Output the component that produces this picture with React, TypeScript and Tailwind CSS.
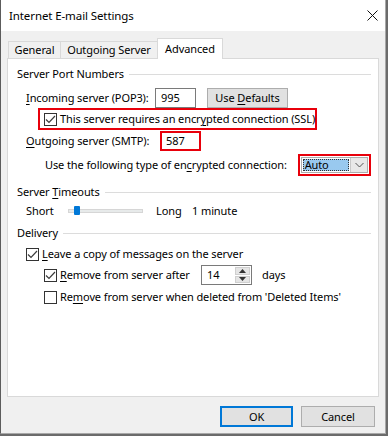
import React from "react";

function U({ c }: { c: string }) {
  return <span className="underline underline-offset-[2px] decoration-[1px]">{c}</span>;
}

function Check({ checked }: { checked: boolean }) {
  return (
    <span className="w-[13px] h-[13px] border border-[#333333] bg-white flex items-center justify-center shrink-0">
      {checked && (
        <svg width="11" height="11" viewBox="0 0 11 11">
          <path d="M1 5.5 L4 8.5 L10 2" fill="none" stroke="#3c3c3c" strokeWidth="1.2" />
        </svg>
      )}
    </span>
  );
}

function Group({ children }: { children: React.ReactNode }) {
  return (
    <div className="flex items-center h-[16px]">
      <span className="whitespace-nowrap">{children}</span>
      <div className="flex-1 h-px bg-[#dcdcdc] ml-[5px]" />
    </div>
  );
}

export default function App() {
  return (
    <div className="w-[388px] h-[436px] bg-[#6b6b6b] font-['Noto_Sans',sans-serif] text-[11px] tracking-[-0.1px] leading-[16px] text-black overflow-hidden">
      <div className="w-[386px] h-[434px] border-l border-l-[#5c5c5c] border-r border-r-[#a8a8a8] border-b border-b-[#a8a8a8] flex flex-col bg-[#f0f0f0]">
        {/* title bar */}
        <div className="h-[31px] bg-white flex items-center justify-between pl-[8px] pr-[8px] shrink-0">
          <span className="text-[11.5px] tracking-[-0.1px]">Internet E-mail Settings</span>
          <svg width="11" height="11" viewBox="0 0 11 11" className="mr-[-1px]">
            <path d="M0.5 0.5 L10.5 10.5 M10.5 0.5 L0.5 10.5" stroke="#111" strokeWidth="1" fill="none" />
          </svg>
        </div>

        <div className="flex-1 flex flex-col px-[6px]">
          {/* tabs */}
          <div className="h-[27px] flex items-end pl-[1px] shrink-0">
            <div className="w-[53px] h-[17px] border-l border-t border-r border-[#d9d9d9] flex items-center justify-center">General</div>
            <div className="w-[97px] h-[17px] border-t border-r border-[#d9d9d9] flex items-center justify-center">Outgoing Server</div>
            <div className="-ml-px w-[66px] h-[21px] -mb-px relative z-10 bg-white border-l border-t border-r border-[#d9d9d9] flex items-center justify-center">Advanced</div>
          </div>

          {/* panel */}
          <div className="h-[339px] bg-white border border-[#d9d9d9] pl-[9px] pr-[7px] pt-[7px] flex flex-col shrink-0">
            <Group>Server Port Numbers</Group>

            <div className="mt-[6px] h-[20px] flex items-center ml-[9px]">
              <span className="w-[129px] whitespace-nowrap"><U c="I" />ncoming server (POP3):</span>
              <div className="w-[41px] h-[20px] border border-[#7a7a7a] flex items-center pl-[5px]">995</div>
              <div className="ml-[11px] w-[81px] h-[20px] bg-[#e1e1e1] border border-[#adadad] flex items-center justify-center">
                Use&nbsp;<U c="D" />efaults
              </div>
            </div>

            <div className="h-[22px] ml-[21px] w-[279px] border-2 border-[#e8000b] flex items-center pl-[4px]">
              <Check checked />
              <span className="ml-[3px] whitespace-nowrap">This server requires an encr<U c="y" />pted connection (SSL)</span>
            </div>

            <div className="mt-[1px] h-[20px] flex items-center ml-[9px]">
              <span className="w-[134px] whitespace-nowrap"><U c="O" />utgoing server (SMTP):</span>
              <div className="w-[41px] h-[20px] border-2 border-[#e8000b] flex items-center pl-[4px]">587</div>
            </div>

            <div className="mt-[3px] h-[22px] flex items-center ml-[28px]">
              <span className="w-[255px] whitespace-nowrap">Use the following type of en<U c="c" />rypted connection:</span>
              <div className="w-[74px] h-[22px] border-2 border-[#e8000b] p-px">
                <div className="h-[16px] border border-[#adadad] bg-white flex">
                  <div className="flex-1 p-px">
                    <div className="h-full bg-[#99c9ef] border border-dotted border-[#333] flex items-center pl-[1px] leading-[12px]">Auto</div>
                  </div>
                  <div className="w-[17px] bg-[#e8e8e8] border-l border-[#c8c8c8] flex items-center justify-center">
                    <svg width="9" height="6" viewBox="0 0 9 6">
                      <path d="M0.5 1 L4.5 5 L8.5 1" stroke="#555" strokeWidth="1" fill="none" />
                    </svg>
                  </div>
                </div>
              </div>
            </div>

            <div className="mt-[8px]">
              <Group>Server <U c="T" />imeouts</Group>
            </div>

            <div className="mt-[3px] h-[16px] flex items-center ml-[9px]">
              <span className="w-[42px]">Short</span>
              <div className="relative w-[75px] h-[4px] bg-[#e7eaea] border border-[#d6d6d6]">
                <div className="absolute left-[5px] top-[-4px] w-[6px] h-[9px] bg-[#0078d7] rounded-[1px]" />
              </div>
              <span className="ml-[13px] w-[36px]">Long</span>
              <span>1 minute</span>
            </div>

            <div className="mt-[6px]">
              <Group>Delivery</Group>
            </div>

            <div className="mt-[5px] h-[16px] flex items-center ml-[9px]">
              <Check checked />
              <span className="ml-[3px] whitespace-nowrap"><U c="L" />eave a copy of messages on the server</span>
            </div>

            <div className="mt-[3px] h-[20px] flex items-center ml-[27px]">
              <Check checked />
              <span className="ml-[3px] w-[141px] whitespace-nowrap"><U c="R" />emove from server after</span>
              <div className="w-[51px] h-[20px] border border-[#7a7a7a] flex items-center">
                <span className="flex-1 pl-[5px]">14</span>
                <div className="w-[16px] h-full flex flex-col gap-px p-px pl-0">
                  <div className="flex-1 bg-[#e5e5e5] border border-[#cfcfcf] flex items-center justify-center">
                    <svg width="7" height="4" viewBox="0 0 7 4"><path d="M0 4 L3.5 0 L7 4 Z" fill="#333" /></svg>
                  </div>
                  <div className="flex-1 bg-[#e5e5e5] border border-[#cfcfcf] flex items-center justify-center">
                    <svg width="7" height="4" viewBox="0 0 7 4"><path d="M0 0 L3.5 4 L7 0 Z" fill="#333" /></svg>
                  </div>
                </div>
              </div>
              <span className="ml-[10px]">days</span>
            </div>

            <div className="mt-[4px] h-[16px] flex items-center ml-[27px]">
              <Check checked={false} />
              <span className="ml-[3px] whitespace-nowrap">Re<U c="m" />ove from server when deleted from 'Deleted Items'</span>
            </div>
          </div>

          {/* buttons */}
          <div className="mt-[9px] flex justify-end gap-[8px] pr-[4px]">
            <div className="w-[73px] h-[21px] bg-[#e1e1e1] border-2 border-[#0078d7] flex items-center justify-center">OK</div>
            <div className="w-[74px] h-[21px] bg-[#e1e1e1] border border-[#adadad] flex items-center justify-center">Cancel</div>
          </div>
        </div>
      </div>
    </div>
  );
}
